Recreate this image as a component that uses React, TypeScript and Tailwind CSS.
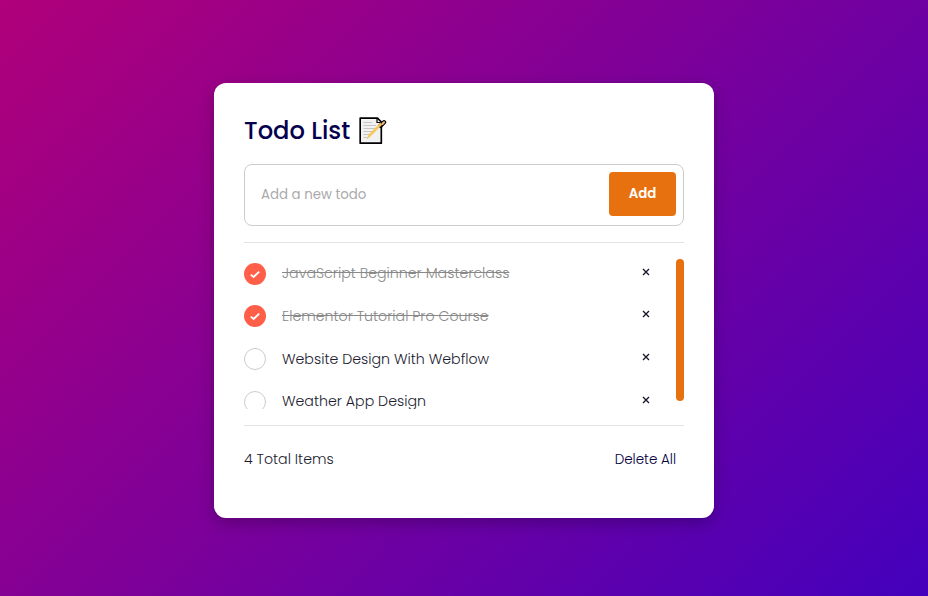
import React from "react";

type Todo = { text: string; done: boolean };

const todos: Todo[] = [
  { text: "JavaScript Beginner Masterclass", done: true },
  { text: "Elementor Tutorial Pro Course", done: true },
  { text: "Website Design With Webflow", done: false },
  { text: "Weather App Design", done: false },
];

function MemoIcon() {
  return (
    <svg width="28" height="28" viewBox="0 0 28 28" fill="none" className="ml-px shrink-0">
      <path d="M1.2 1.2H18.5L22.3 5V26.2H1.2Z" fill="#fff" stroke="#000" strokeWidth="1.7" strokeLinejoin="round" />
      <path d="M2.6 2.6H17.5L20.9 6V24.8H2.6Z" fill="#f1f1f1" />
      <path d="M4.5 5.5H13M4.5 8.5H17M4.5 11.5H17M4.5 14.5H14M4.5 17.5H11M4.5 20.5H9" stroke="#c4c4c4" />
      <path d="M18 2V5.5H21.5" stroke="#000" strokeWidth="1.2" />
      <path d="M25 5.3L21.5 8.8" stroke="#000" strokeWidth="4.4" strokeLinecap="round" />
      <path d="M22.8 7.6L12 18.4L8.5 21.5L10.4 17.2L21.2 6.4Z" fill="#f5c65a" stroke="#f5c65a" strokeWidth="1" strokeLinejoin="round" />
      <path d="M23.4 6.9L25 5.3" stroke="#eeb27a" strokeWidth="2.2" strokeLinecap="round" />
    </svg>
  );
}

function Check({ done }: { done: boolean }) {
  return done ? (
    <span className="flex size-[22px] shrink-0 items-center justify-center rounded-full bg-[#ff5f49]">
      <svg width="12" height="12" viewBox="0 0 12 12" fill="none">
        <path d="M1.8 6.6L4.6 9L10.2 3.6" stroke="#fff" strokeWidth="1.9" />
      </svg>
    </span>
  ) : (
    <span className="size-[22px] shrink-0 rounded-full border border-[#ccc]" />
  );
}

export default function App() {
  return (
    <main className="flex h-[596px] w-[928px] justify-center bg-[linear-gradient(135deg,#b0007a,#4400bc)] pt-[83px] font-['Poppins','Inter',sans-serif] text-[#1c1c30]">
      <section className="h-[435px] w-[500px] rounded-[12px] bg-white px-[30px] pt-[32px] shadow-[0_5px_15px_rgba(0,0,0,0.25)]">
        <header className="flex h-[32px] items-center">
          <h1 className="w-[114px] whitespace-nowrap text-[24.2px] leading-[32px] font-medium text-[#04004e]">Todo List</h1>
          <MemoIcon />
        </header>
        <div className="mt-[17px] flex h-[62px] items-start rounded-[8px] border border-[#ccc] pt-[7px] pr-[7px] pl-4">
          <span className="flex-1 pt-[11px] text-[13.333px] leading-[24px] font-normal text-[#aaa]">Add a new todo</span>
          <button className="h-[44px] w-[67px] rounded-[4px] bg-[#e8710f] text-[13.333px] font-semibold text-white">Add</button>
        </div>
        <div className="mt-4 h-px bg-[#e3e3e3]" />
        <div className="mt-4 flex h-[150px] overflow-hidden">
          <ul className="w-[432px]">
            {todos.map((todo) => (
              <li key={todo.text} className="flex h-[42.6px] items-start pt-[3.8px]">
                <Check done={todo.done} />
                <span
                  className={`-mt-[0.4px] flex-1 pl-4 text-[14.2px] leading-[22px] font-light whitespace-nowrap ${todo.done ? "text-[#888] line-through" : ""}`}
                >
                  {todo.text}
                </span>
                <svg width="8" height="8" viewBox="0 0 8 8" className="mt-[5px] mr-[26px]" fill="none">
                  <path d="M1 1L7 7M7 1L1 7" stroke="#15152a" strokeWidth="1.3" />
                </svg>
              </li>
            ))}
          </ul>
          <div className="h-[142px] w-2 rounded-full bg-[#e8710f]" />
        </div>
        <div className="mt-4 h-px bg-[#e3e3e3]" />
        <footer className="mt-[22px] flex h-[22px] items-start justify-between pr-2 leading-[22px] font-light">
          <span className="text-[14.2px]">4 Total Items</span>
          <button className="pt-px text-[13.5px] text-[#04003e]">Delete All</button>
        </footer>
      </section>
    </main>
  );
}
